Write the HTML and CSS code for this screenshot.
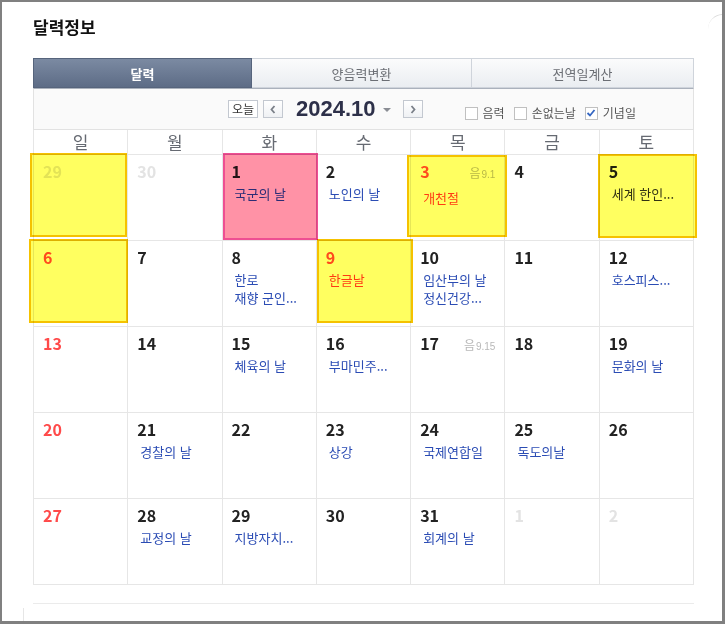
FILE: index.html
```html
<!DOCTYPE html>
<html lang="ko">
<head>
<meta charset="utf-8">
<title>달력정보</title>
<link rel="stylesheet" href="styles.css">
</head>
<body>
<div class="frame">
  <span class="arc"></span>
  <div class="panel">
    <h2 class="title">달력정보</h2>
    <div class="tabs">
      <div class="tab active">달력</div>
      <div class="tab">양음력변환</div>
      <div class="tab">전역일계산</div>
    </div>
    <div class="nav">
      <button class="btn today">오늘</button>
      <button class="btn arrow"><svg width="6" height="9" viewBox="0 0 6 9"><polyline points="4.5,1 1.5,4.5 4.5,8" fill="none" stroke="#7a7f88" stroke-width="1.8"/></svg></button>
      <div class="ym">2024.10</div>
      <span class="caret"></span>
      <button class="btn arrow"><svg width="6" height="9" viewBox="0 0 6 9"><polyline points="1.5,1 4.5,4.5 1.5,8" fill="none" stroke="#7a7f88" stroke-width="1.8"/></svg></button>
      <div class="checks">
        <label class="chk"><span class="box"></span>음력</label>
        <label class="chk"><span class="box"></span>손없는날</label>
        <label class="chk"><span class="box"><svg width="10" height="10" viewBox="0 0 10 10"><polyline points="1.5,5 4,7.5 8.5,2" fill="none" stroke="#3466c2" stroke-width="1.8"/></svg></span>기념일</label>
      </div>
    </div>
    <div class="grid head">
      <div class="dh">일</div><div class="dh">월</div><div class="dh">화</div><div class="dh">수</div><div class="dh">목</div><div class="dh">금</div><div class="dh">토</div>
    </div>
    <div class="grid">
      <div class="cell mark m29"><div class="num other">29</div></div>
      <div class="cell"><div class="num other">30</div></div>
      <div class="cell pink m1"><div class="num">1</div><div class="ev">국군의 날</div></div>
      <div class="cell"><div class="num">2</div><div class="ev">노인의 날</div></div>
      <div class="cell mark m3"><div class="num red">3<span class="lunar"><span class="lk">음</span>9.1</span></div><div class="ev hol">개천절</div></div>
      <div class="cell"><div class="num">4</div></div>
      <div class="cell mark m5"><div class="num">5</div><div class="ev dark">세계 한인...</div></div>

      <div class="cell mark m6"><div class="num red">6</div></div>
      <div class="cell"><div class="num">7</div></div>
      <div class="cell"><div class="num">8</div><div class="ev">한로</div><div class="ev">재향 군인...</div></div>
      <div class="cell mark m9"><div class="num red">9</div><div class="ev hol">한글날</div></div>
      <div class="cell"><div class="num">10</div><div class="ev">임산부의 날</div><div class="ev">정신건강...</div></div>
      <div class="cell"><div class="num">11</div></div>
      <div class="cell"><div class="num">12</div><div class="ev">호스피스...</div></div>

      <div class="cell"><div class="num red">13</div></div>
      <div class="cell"><div class="num">14</div></div>
      <div class="cell"><div class="num">15</div><div class="ev">체육의 날</div></div>
      <div class="cell"><div class="num">16</div><div class="ev">부마민주...</div></div>
      <div class="cell"><div class="num">17<span class="lunar"><span class="lk">음</span>9.15</span></div></div>
      <div class="cell"><div class="num">18</div></div>
      <div class="cell"><div class="num">19</div><div class="ev">문화의 날</div></div>

      <div class="cell"><div class="num red">20</div></div>
      <div class="cell"><div class="num">21</div><div class="ev">경찰의 날</div></div>
      <div class="cell"><div class="num">22</div></div>
      <div class="cell"><div class="num">23</div><div class="ev">상강</div></div>
      <div class="cell"><div class="num">24</div><div class="ev">국제연합일</div></div>
      <div class="cell"><div class="num">25</div><div class="ev">독도의날</div></div>
      <div class="cell"><div class="num">26</div></div>

      <div class="cell"><div class="num red">27</div></div>
      <div class="cell"><div class="num">28</div><div class="ev">교정의 날</div></div>
      <div class="cell"><div class="num">29</div><div class="ev">지방자치...</div></div>
      <div class="cell"><div class="num">30</div></div>
      <div class="cell"><div class="num">31</div><div class="ev">회계의 날</div></div>
      <div class="cell"><div class="num other">1</div></div>
      <div class="cell"><div class="num other">2</div></div>
    </div>
    <div class="foot"></div>
  </div>
  <div class="stub"></div>
</div>
</body>
</html>
```

FILE: styles.css
```css
* { box-sizing: border-box; }
html, body { margin: 0; padding: 0; background: #fff; }
body { font-family: "Noto Sans CJK KR", "Noto Sans", sans-serif; color: #222; }

.frame {
  position: relative;
  width: 725px;
  height: 624px;
  border-style: solid;
  border-color: #808080;
  border-width: 2px 3px 3px 2px;
  overflow: hidden;
  background: #fff;
}
.arc {
  position: absolute;
  left: 706px;
  top: 12px;
  width: 30px;
  height: 30px;
  border-top: 1px solid #dcdcdc;
  border-radius: 50%;
}

.panel { margin-left: 31px; width: 661px; }

.title {
  margin: 0;
  padding-top: 13px;
  font-size: 17px;
  line-height: 24px;
  font-weight: 700;
  color: #111;
}

.tabs {
  margin-top: 19px;
  display: grid;
  grid-template-columns: 219px 220px 222px;
  height: 30px;
}
.tab {
  display: flex;
  align-items: center;
  justify-content: center;
  font-size: 13px;
  color: #6b6e74;
  background: linear-gradient(#fbfbfc, #eaedf1);
  border: 1px solid #cfd4db;
  border-left: none;
}
.tab.active {
  color: #fff;
  font-weight: 700;
  background: linear-gradient(#7b8aa2, #5d6c86);
  border: 1px solid #56647c;
}

.nav {
  height: 42px;
  display: flex;
  align-items: center;
  padding-left: 194px;
  background: #fafafa;
  border: 1px solid #e2e2e2;
  border-top-color: #aab1bc;
}
.btn {
  margin: 0;
  padding: 0;
  height: 18px;
  border: 1px solid #c3c8d0;
  background: linear-gradient(#ffffff, #eff1f4);
  display: flex;
  align-items: center;
  justify-content: center;
  font-family: inherit;
}
.today {
  width: 30px;
  font-size: 12px;
  color: #333;
  background: #fff;
  line-height: 16px;
}
.arrow { width: 20px; margin-left: 5px; }
.ym {
  margin-left: 13px;
  font-family: "Liberation Sans", Arial, sans-serif;
  font-weight: 700;
  font-size: 22px;
  color: #2d3049;
  line-height: 24px;
}
.caret {
  margin-left: 7px;
  margin-top: 1px;
  width: 0;
  height: 0;
  border-left: 4px solid transparent;
  border-right: 4px solid transparent;
  border-top: 4px solid #8a8d94;
}
.caret + .btn { margin-left: 12px; }

.checks {
  display: flex;
  align-items: center;
  margin-left: 42px;
  margin-top: 8px;
}
.chk {
  display: flex;
  align-items: center;
  font-size: 12px;
  color: #555;
  margin-right: 9px;
  line-height: 14px;
}
.box {
  width: 13px;
  height: 13px;
  border: 1px solid #c0c0c0;
  background: #fff;
  margin-right: 5px;
  display: flex;
  align-items: center;
  justify-content: center;
}

.grid {
  display: grid;
  grid-template-columns: repeat(7, 1fr);
  border-left: 1px solid #e6e6e6;
}
.dh {
  height: 25px;
  border-right: 1px solid #e6e6e6;
  border-bottom: 1px solid #e6e6e6;
  text-align: center;
  font-size: 17px;
  line-height: 24px;
  color: #666a72;
}
.cell {
  height: 86px;
  border-right: 1px solid #e6e6e6;
  border-bottom: 1px solid #e6e6e6;
}
.num {
  display: flex;
  justify-content: space-between;
  align-items: baseline;
  padding: 6px 9px 0 9px;
  font-size: 16px;
  line-height: 20px;
  font-weight: 700;
  color: #222;
}
.num.red { color: #ff4a4a; }
.num.other { color: #e3e3e3; }
.lunar {
  font-size: 10px;
  font-weight: 400;
  color: #b8b8b8;
  font-family: "Liberation Sans", Arial, sans-serif;
}
.lunar .lk { font-family: "Noto Sans CJK KR", sans-serif; font-size: 12px; margin-right: 1px; }
.ev {
  padding-left: 12px;
  font-size: 13px;
  line-height: 17px;
  color: #2b4cb4;
  white-space: nowrap;
}
.num + .ev { margin-top: 4px; }
.ev + .ev { margin-top: 1px; }
.ev.hol { color: #ff3a30; }
.ev.dark { color: #333; }

.mark, .pink { position: relative; }
.mark::after, .pink::after {
  content: "";
  position: absolute;
  mix-blend-mode: multiply;
  pointer-events: none;
}
.mark::after {
  background: #ffff60;
  border: 2px solid #f5c200;
}
.pink::after {
  background: #ff92a6;
  border: 2px solid #ee4f92;
}
.m29::after { left: -4px; top: -2px; right: 0; bottom: 3px; }
.m6::after { left: -5px; top: -2px; right: -1px; bottom: 3px; }
.m1::after { left: 0; top: -2px; right: -2px; bottom: 0; }
.m3::after { left: -4px; top: 0; right: -3px; bottom: 3px; }
.m5::after { left: -2px; top: -1px; right: -4px; bottom: 2px; }
.m9::after { left: 0; top: -2px; right: -3px; bottom: 3px; }

.foot {
  margin-top: 18px;
  border-top: 1px solid #ebebeb;
}
.stub {
  margin-left: 21px;
  margin-top: 4px;
  width: 1px;
  height: 20px;
  background: #e6e6e6;
}
```
